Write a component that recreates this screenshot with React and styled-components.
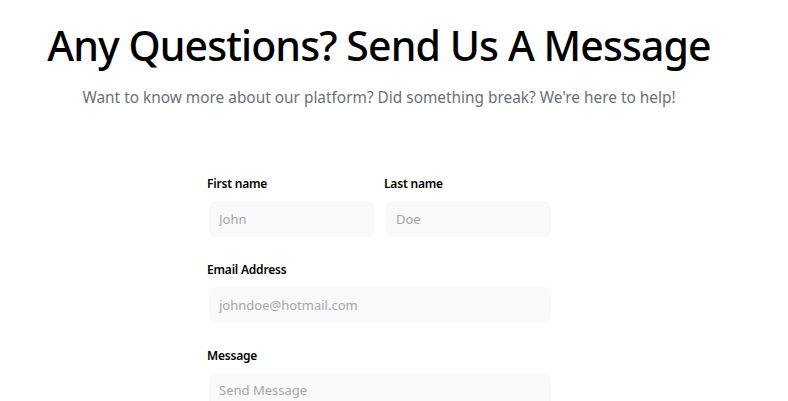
import styled, { createGlobalStyle } from "styled-components";

const GlobalStyle = createGlobalStyle`
  body {
    margin: 0;
    background: #ffffff;
    font-family: "Noto Sans", "Open Sans", sans-serif;
  }
`;

const Page = styled.main`
  width: 758px;
  display: flex;
  flex-direction: column;
  align-items: center;
  padding-top: 16px;
`;

const Title = styled.h1`
  margin: 0;
  font-size: 41px;
  font-weight: 500;
  color: #000;
  line-height: 58px;
  letter-spacing: -0.9px;
`;

const Subtitle = styled.p`
  margin: 14px 0 0;
  font-size: 15.4px;
  color: #6b7078;
  line-height: 20px;
`;

const Form = styled.form`
  width: 344px;
  margin-top: 68px;
  display: flex;
  flex-direction: column;
  gap: 25px;
`;

const Row = styled.div`
  display: grid;
  grid-template-columns: minmax(0, 1fr) minmax(0, 1fr);
  gap: 10px;
`;

const Field = styled.div`
  display: flex;
  flex-direction: column;
  min-width: 0;
`;

const Label = styled.label`
  font-size: 12px;
  font-weight: 600;
  color: #000;
  line-height: 16px;
  letter-spacing: -0.2px;
  margin-bottom: 9px;
`;

const Input = styled.input`
  margin-left: 2px;
  width: auto;
  min-width: 0;
  height: 36px;
  box-sizing: border-box;
  border: none;
  border-radius: 6px;
  background: #f8f9fb;
  padding: 0 10px;
  font-family: inherit;
  font-size: 13px;
  color: #333;
  outline: none;
  &::placeholder {
    color: #a3a6ab;
  }
`;

const TextArea = styled.textarea`
  margin-left: 2px;
  height: 110px;
  box-sizing: border-box;
  border: none;
  border-radius: 6px;
  background: #f8f9fb;
  padding: 8px 10px;
  font-family: inherit;
  font-size: 13px;
  resize: none;
  outline: none;
  &::placeholder {
    color: #a3a6ab;
  }
`;

export default function App() {
  return (
    <>
      <GlobalStyle />
      <Page>
        <Title>Any Questions? Send Us A Message</Title>
        <Subtitle>
          Want to know more about our platform? Did something break? We're here to help!
        </Subtitle>
        <Form onSubmit={(e) => e.preventDefault()}>
          <Row>
            <Field>
              <Label>First name</Label>
              <Input placeholder="John" />
            </Field>
            <Field>
              <Label>Last name</Label>
              <Input placeholder="Doe" />
            </Field>
          </Row>
          <Field>
            <Label>Email Address</Label>
            <Input placeholder="johndoe@hotmail.com" />
          </Field>
          <Field>
            <Label>Message</Label>
            <TextArea placeholder="Send Message" />
          </Field>
        </Form>
      </Page>
    </>
  );
}
